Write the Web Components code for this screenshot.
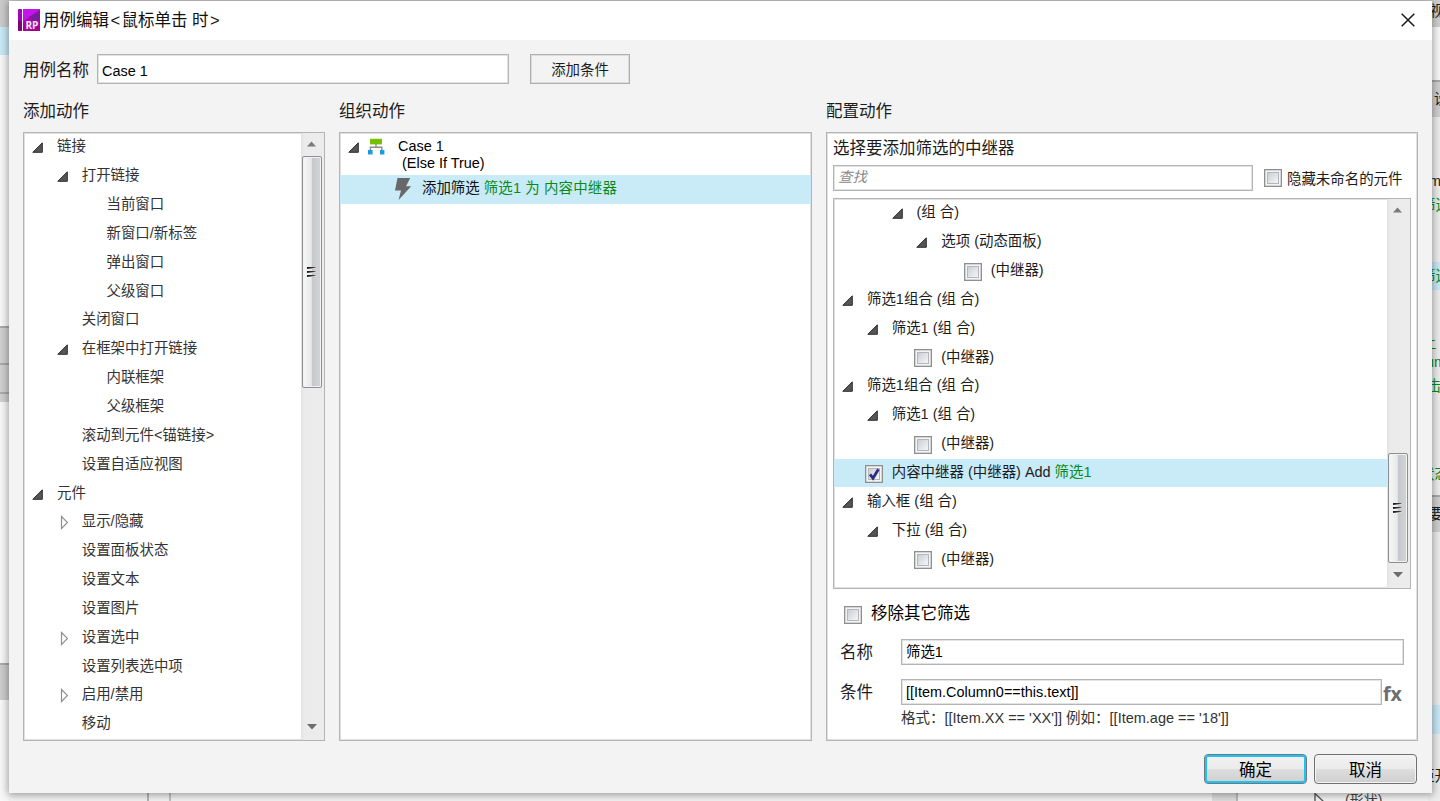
<!DOCTYPE html>
<html lang="zh-CN">
<head>
<meta charset="utf-8">
<title>用例编辑</title>
<style>
  html, body {
    margin: 0;
    height: 100%;
    overflow: hidden;
  }
  body {
    position: relative;
    font-family: "Liberation Sans", "Noto Sans CJK SC", sans-serif;
    font-size: 14.45px;
    color: #1c1c1c;
    background: #f4f4f4;
  }
</style>
</head>
<body>
<app-backdrop></app-backdrop>
<case-dialog></case-dialog>

<script>
// One slice of the window behind the dialog, text is clipped by the dialog edge
class BackSlice extends HTMLElement {
  constructor() {
    super();
    this.attachShadow({ mode: 'open' });
  }

  connectedCallback() {
    const h = this.getAttribute('h');
    const bg = this.getAttribute('bg') || 'transparent';
    const indent = this.getAttribute('indent') || 0;
    const line = this.hasAttribute('line') ? 'inset 0 2px #a9a9a9' : 'none';
    this.shadowRoot.innerHTML = `
      <style>
        :host {
          display: flex;
          align-items: center;
          flex: none;
          box-sizing: border-box;
          height: ${h}px;
          background: ${bg};
          box-shadow: ${line};
          white-space: nowrap;
          line-height: 20px;
        }
        span { margin-left: ${indent}px; }
      </style>
      <span><slot></slot></span>
    `;
  }
}

class AppBackdrop extends HTMLElement {
  constructor() {
    super();
    this.attachShadow({ mode: 'open' });
  }

  connectedCallback() {
    this.shadowRoot.innerHTML = `
      <style>
        :host {
          display: grid;
          grid-template-columns: 9px 1fr 12px;
          width: 1440px;
          height: 801px;
          overflow: hidden;
        }
        .left, .right { display: flex; flex-direction: column; overflow: hidden; }
        .left { background: #f8f8f8; }
        .right { background: #ededed; }
        .middle { display: flex; flex-direction: column; justify-content: space-between; }
        .top { height: 2px; background: #d2d2d2; }
        .bottom { display: flex; height: 9px; background: #f4f4f4; }
        .bottom i { flex: none; }
        .green { color: #0a8a1c; }
        .bottom span { font-size: 14px; line-height: 17px; margin-left: 20px; height: 9px; overflow: hidden; color: #444; }
        svg { margin-left: 76px; flex: none; }
      </style>
      <div class="left">
        <back-slice h="27" bg="#cbcbcb"></back-slice>
        <back-slice h="28" bg="#c9e9f6"></back-slice>
        <back-slice h="271"></back-slice>
        <back-slice h="37" bg="#d0d0d0" line></back-slice>
        <back-slice h="29" bg="#d0d0d0" line></back-slice>
        <back-slice h="10" bg="#d0d0d0" line></back-slice>
        <back-slice h="261"></back-slice>
        <back-slice h="37" bg="#cdcdcd" line></back-slice>
      </div>
      <div class="middle">
        <div class="top"></div>
        <div class="bottom">
          <i style="width:138px"></i><i style="width:2px;background:#b5b5b5"></i>
          <i style="width:20px"></i><i style="width:2px;background:#c3c3c3"></i>
          <i style="width:1041px"></i><i style="width:24px;background:#dedede"></i>
          <i style="width:2px;background:#bababa"></i>
          <svg width="11" height="9"><path d="M1 10V1.5L10 10" fill="none" stroke="#555" stroke-width="1.3"/></svg>
          <span>(形状)</span>
        </div>
      </div>
      <div class="right">
        <back-slice h="21" bg="#d0d0d0" indent="2">视图</back-slice>
        <back-slice h="6" bg="#d0d0d0"></back-slice>
        <back-slice h="53" bg="#f8f8f8"></back-slice>
        <back-slice h="37" bg="#d0d0d0" indent="6" line>设置</back-slice>
        <back-slice h="52"></back-slice>
        <back-slice h="24" indent="1">m</back-slice>
        <back-slice h="24" class="green" indent="-7">筛选</back-slice>
        <back-slice h="45"></back-slice>
        <back-slice h="28" bg="#c9e9f6" class="green" indent="-7">筛选</back-slice>
        <back-slice h="46"></back-slice>
        <back-slice h="14" class="green" indent="-6">上 -</back-slice>
        <back-slice h="24" class="green" indent="-2">um</back-slice>
        <back-slice h="24" class="green" indent="-1">击</back-slice>
        <back-slice h="62"></back-slice>
        <back-slice h="28" class="green" indent="-8">状态</back-slice>
        <back-slice h="7"></back-slice>
        <back-slice h="37" bg="#d0d0d0" indent="1" line>要</back-slice>
        <back-slice h="173"></back-slice>
        <back-slice h="29" bg="#c9e9f6"></back-slice>
        <back-slice h="28"></back-slice>
        <back-slice h="28" indent="-8">距开</back-slice>
      </div>
    `;
  }
}

class TextBox extends HTMLElement {
  constructor() {
    super();
    this.attachShadow({ mode: 'open' });
    this.shadowRoot.innerHTML = `
      <style>
        :host {
          display: flex;
          align-items: center;
          box-sizing: border-box;
          height: 26px;
          padding: 0 4px;
          border: 1px solid #b4b4b4;
          box-shadow: inset 0 0 0 1px #e2e2e2;
          background: #fff;
          color: #000;
          white-space: nowrap;
          line-height: 20px;
        }
        :host([placeholder]) { color: #8a8a8a; font-style: italic; }
      </style>
      <slot></slot>
    `;
  }
}

class CheckBox extends HTMLElement {
  constructor() {
    super();
    this.attachShadow({ mode: 'open' });
  }

  connectedCallback() {
    const tick = this.hasAttribute('checked')
      ? '<svg width="14" height="14" viewBox="0 0 14 14"><path d="M3 7.4L6 11.2L11.4 2.2" fill="none" stroke="#2b2c86" stroke-width="2.8"/></svg>'
      : '';
    this.shadowRoot.innerHTML = `
      <style>
        :host {
          display: flex;
          flex: none;
          box-sizing: border-box;
          width: 18px;
          height: 18px;
          border: 1px solid #8e8f8f;
          padding: 2px;
          background: #f4f4f4;
          box-shadow: inset 0 0 0 .5px #b5b5b5;
        }
        .well {
          flex: 1;
          box-sizing: border-box;
          border: 1px solid #b3b7bd;
          background: linear-gradient(135deg, #cbcfd5, #f6f6f6);
        }
        svg { display: block; margin: -2px; }
      </style>
      <div class="well">${tick}</div>
    `;
  }
}

class PushButton extends HTMLElement {
  constructor() {
    super();
    this.attachShadow({ mode: 'open' });
    this.shadowRoot.innerHTML = `
      <style>
        :host {
          display: flex;
          align-items: center;
          justify-content: center;
          box-sizing: border-box;
          width: 103px;
          height: 30px;
          padding-top: 1px;
          border: 1px solid #707070;
          border-radius: 4px;
          background: linear-gradient(#f2f2f2, #ebebeb 48%, #dddddd 52%, #cfcfcf);
          box-shadow: inset 0 0 0 1px #f4f4f4;
          font-size: 16.5px;
          line-height: 22px;
          color: #000;
        }
        :host([primary]) {
          border-color: #707a7e;
          box-shadow: inset 0 0 0 2px #1fc3f3;
        }
        :host([flat]) {
          width: 100px;
          border: 1px solid #b0b0b0;
          border-radius: 0;
          background: #f3f3f3;
          box-shadow: inset 0 0 0 1px #dcdcdc;
          font-size: 14.45px;
          color: #1c1c1c;
        }
      </style>
      <slot></slot>
    `;
  }
}

class ScrollBar extends HTMLElement {
  constructor() {
    super();
    this.attachShadow({ mode: 'open' });
  }

  connectedCallback() {
    const before = this.getAttribute('before');
    const size = this.getAttribute('size');
    this.shadowRoot.innerHTML = `
      <style>
        :host {
          display: flex;
          flex-direction: column;
          align-items: center;
          flex: none;
          box-sizing: border-box;
          width: 23px;
          padding-right: 1px;
          background: linear-gradient(90deg, #e2e2e2, #ebebeb 3px, #ececec);
        }
        .up { margin: 8px 1px 0 0; }
        .down { margin: auto 0 10px; }
        svg { display: block; flex: none; }
        .thumb {
          display: flex;
          align-items: center;
          justify-content: center;
          box-sizing: border-box;
          width: 20px;
          height: ${size}px;
          margin-top: ${before}px;
          border: 1px solid #8d8f92;
          border-radius: 2px;
          background: linear-gradient(90deg, #f7f7f7, #e9e9eb 46%, #c6c8cb 52%, #d3d4d7);
          box-shadow: inset 0 0 0 1px #f1f1f1;
        }
      </style>
      <svg class="up" width="9" height="6"><path d="M0 5.5L4.5 .5L9 5.5Z" fill="#7b7b7b"/></svg>
      <div class="thumb">
        <svg width="10" height="13">
          <defs><linearGradient id="g"><stop stop-color="#1b1b1b"/><stop offset=".6" stop-color="#333"/><stop offset="1" stop-color="#aaa"/></linearGradient></defs>
          <path d="M0 1H10V2L0 4ZM0 5H10V6L0 8ZM0 9H10V10L0 12Z" fill="#fff" opacity=".8"/>
          <path d="M0 1H10L8 2L0 3ZM0 5H10L8 6L0 7ZM0 9H10L8 10L0 11Z" fill="url(#g)"/>
        </svg>
      </div>
      <svg class="down" width="10" height="6"><path d="M0 0H10L5 5.5Z" fill="#6c6c6c"/></svg>
    `;
  }
}

// level: indent depth, state: open | closed | check | checked
class TreeRow extends HTMLElement {
  constructor() {
    super();
    this.attachShadow({ mode: 'open' });
  }

  connectedCallback() {
    const level = Number(this.getAttribute('level') || 0);
    const state = this.getAttribute('state');
    this.shadowRoot.innerHTML = `
      <style>
        :host {
          display: flex;
          align-items: center;
          flex: none;
          box-sizing: border-box;
          height: 28.85px;
          padding-left: ${(level * 24.75).toFixed(2)}px;
          padding-bottom: 2px;
          white-space: nowrap;
          line-height: 20px;
        }
        :host([selected]) { background: #c9eaf7; }
        .mark {
          display: flex;
          justify-content: flex-end;
          flex: none;
          box-sizing: border-box;
          width: 33px;
          padding: 3px 14px 0 0;
        }
        .mark.box { padding-right: 9px; }
      </style>
      <div class="mark ${state && state.startsWith('check') ? 'box' : ''}">${this.getMark(state)}</div>
      <slot></slot>
    `;
  }

  getMark(state) {
    if (state === 'open') return '<svg width="11" height="11"><path d="M.8 10.3L10.3 .8V10.3Z" fill="#555" stroke="#2e2e2e"/></svg>';
    if (state === 'closed') return '<svg width="11" height="15"><path d="M4.5 1.5V13.5L10.5 7.5Z" fill="#fff" stroke="#8f8f8f" stroke-width="1.2"/></svg>';
    if (state === 'check') return '<check-box></check-box>';
    if (state === 'checked') return '<check-box checked></check-box>';
    return '';
  }
}

class ListPanel extends HTMLElement {
  constructor() {
    super();
    this.attachShadow({ mode: 'open' });
    this.shadowRoot.innerHTML = `
      <style>
        :host {
          display: flex;
          box-sizing: border-box;
          border: 1px solid #b4b4b4;
          box-shadow: inset 0 0 0 1px #e0e0e0;
          background: #fff;
          overflow: hidden;
        }
        .rows {
          display: flex;
          flex-direction: column;
          flex: 1;
          min-width: 0;
        }
      </style>
      <div class="rows"><slot></slot></div>
      <slot name="scroll"></slot>
    `;
  }
}

class DialogTitle extends HTMLElement {
  constructor() {
    super();
    this.attachShadow({ mode: 'open' });
    this.shadowRoot.innerHTML = `
      <style>
        :host {
          display: flex;
          align-items: center;
          box-sizing: border-box;
          height: 39px;
          padding: 0 16.5px 2px 9px;
          background: #fff;
          font-size: 16.5px;
          line-height: 24px;
          color: #111;
        }
        .text { flex: 1; padding: 1px 0 0 3px; }
        .logo { display: block; }
      </style>
      <svg class="logo" width="22" height="22" viewBox="0 0 22 22">
        <defs>
          <linearGradient id="p" x1="0" y1="0" x2="0" y2="1"><stop stop-color="#b70fd0"/><stop offset="1" stop-color="#a3008f"/></linearGradient>
        </defs>
        <rect width="4" height="22" rx="1" fill="#a400b8"/>
        <path d="M0 12H4V22H1L0 21Z" fill="#7d0078"/>
        <rect x="5" width="17" height="22" rx=".6" fill="url(#p)"/>
        <path d="M5 12L22 1V0H5Z" fill="#c516ea"/>
        <path d="M11 8L22 1V12H15Z" fill="#7a1d9c"/>
        <text x="7.4" y="19.6" font-family="Open Sans, sans-serif" font-size="10.5" font-weight="700" textLength="13" lengthAdjust="spacingAndGlyphs" fill="#f6e4fa">RP</text>
      </svg>
      <div class="text"><slot></slot></div>
      <svg width="14" height="14"><path d="M.7 .7L13.3 13.3M13.3 .7L.7 13.3" stroke="#1a1a1a" stroke-width="1.5"/></svg>
    `;
  }
}

class CaseDialog extends HTMLElement {
  constructor() {
    super();
    this.attachShadow({ mode: 'open' });
  }

  connectedCallback() {
    this.shadowRoot.innerHTML = `
      <style>
        :host {
          position: absolute;
          left: 9px;
          top: 1px;
          width: 1422.5px;
          height: 792px;
          display: flex;
          flex-direction: column;
          background: #f3f3f3;
          box-shadow: 0 1px 8px 1px rgba(0, 0, 0, .38);
        }
        .wide { letter-spacing: 1.4px; padding-left: 1.4px; }
        .name {
          display: flex;
          align-items: center;
          padding: 14px 0 0 14px;
        }
        .name label { width: 74px; padding-top: 2px; }
        .name text-box { width: 412px; height: 30px; margin-right: 21px; padding-top: 3px; }
        label, h2 {
          flex: none;
          margin: 0;
          font-size: 16.5px;
          font-weight: 400;
          line-height: 24px;
        }
        .columns {
          display: grid;
          grid-template-columns: 302px 473px 592px;
          grid-template-rows: 48px 609px;
          column-gap: 14px;
          padding-left: 14px;
        }
        .columns h2 { padding-top: 15px; }
        .actions { color: #333; }
        .case {
          display: flex;
          padding: 5px 0 0 8px;
          height: 37px;
          line-height: 17.3px;
          color: #000;
        }
        .case svg, .step svg { flex: none; }
        .case div { margin-left: 13px; white-space: pre; }
        .step {
          display: flex;
          align-items: center;
          height: 28.5px;
          padding-left: 54px;
          gap: 10px;
          background: #c9eaf7;
          line-height: 20px;
          color: #111;
        }
        .step span { padding-bottom: 2px; }
        b { font-weight: 400; color: #0a8a1c; }
        .step b { letter-spacing: .15px; }
        .config {
          display: flex;
          flex-direction: column;
          box-sizing: border-box;
          padding: 3px 5px 0 6px;
          border: 1px solid #b4b4b4;
          box-shadow: inset 0 0 0 1px #e0e0e0;
          background: #fff;
        }
        .search { display: flex; align-items: flex-start; margin-top: 5px; }
        .search text-box { width: 420px; padding-bottom: 2px; }
        .search check-box { margin: 4px 5px 0 11px; }
        .search span { line-height: 20px; padding-top: 4px; }
        .config list-panel { width: 578px; height: 391px; margin-top: 7px; }
        .remove { display: flex; align-items: center; height: 24px; margin: 12px 0 0 11px; gap: 9px; color: #000; }
        .remove check-box { margin-top: 4px; }
        .remove label { padding-bottom: 1px; }
        .field { display: flex; align-items: center; height: 26px; margin: 14px 0 0 7px; }
        .field label { width: 61px; }
        .field text-box { width: 503px; }
        .field .short { width: 481px; }
        .fx {
          font: 700 19.5px "Open Sans", sans-serif;
          color: #6e6e6e;
          padding: 2px 0 0 1px;
        }
        .hint { margin: 3px 0 0 68px; line-height: 20px; color: #333; font-size: 14.5px; }
        .buttons {
          display: flex;
          justify-content: flex-end;
          gap: 7px;
          padding: 13px 14.5px 0 0;
        }
      </style>
      <dialog-title>用例编辑<span class="wide">&lt;</span>鼠标单击 时<span class="wide">&gt;</span></dialog-title>
      <div class="name">
        <label>用例名称</label>
        <text-box>Case 1</text-box>
        <push-button flat>添加条件</push-button>
      </div>
      <div class="columns">
        <h2>添加动作</h2>
        <h2>组织动作</h2>
        <h2>配置动作</h2>
        <list-panel class="actions">
          <tree-row state="open">链接</tree-row>
          <tree-row level="1" state="open">打开链接</tree-row>
          <tree-row level="2">当前窗口</tree-row>
          <tree-row level="2">新窗口/新标签</tree-row>
          <tree-row level="2">弹出窗口</tree-row>
          <tree-row level="2">父级窗口</tree-row>
          <tree-row level="1">关闭窗口</tree-row>
          <tree-row level="1" state="open">在框架中打开链接</tree-row>
          <tree-row level="2">内联框架</tree-row>
          <tree-row level="2">父级框架</tree-row>
          <tree-row level="1">滚动到元件&lt;锚链接&gt;</tree-row>
          <tree-row level="1">设置自适应视图</tree-row>
          <tree-row state="open">元件</tree-row>
          <tree-row level="1" state="closed">显示/隐藏</tree-row>
          <tree-row level="1">设置面板状态</tree-row>
          <tree-row level="1">设置文本</tree-row>
          <tree-row level="1">设置图片</tree-row>
          <tree-row level="1" state="closed">设置选中</tree-row>
          <tree-row level="1">设置列表选中项</tree-row>
          <tree-row level="1" state="closed">启用/禁用</tree-row>
          <tree-row level="1">移动</tree-row>
          <scroll-bar slot="scroll" before="9" size="232"></scroll-bar>
        </list-panel>
        <list-panel>
          <div class="case">
            <svg width="37" height="18">
              <path d="M.8 14.3L10.3 4.8V14.3Z" fill="#555" stroke="#2e2e2e"/>
              <path d="M28 6V9.3M22.4 13V9.3H33.8V13" fill="none" stroke="#8c8c8c" stroke-width="1.4"/>
              <path d="M22 .8H34V6.4H22Z" fill="#76c000"/>
              <path d="M20 12H24.6V16.4H20ZM32 12H36.4V16.4H32Z" fill="#1b9ddb"/>
            </svg>
            <div>Case 1
 (Else If True)</div>
          </div>
          <div class="step">
            <svg width="18" height="24"><path d="M3.5 1H16.2L12 9.2H17.2L4.6 23L7 13.6H1Z" fill="#686868"/></svg>
            <span>添加筛选 <b>筛选1 为 内容中继器</b></span>
          </div>
        </list-panel>
        <div class="config">
          <label>选择要添加筛选的中继器</label>
          <div class="search">
            <text-box placeholder>查找</text-box>
            <check-box></check-box>
            <span>隐藏未命名的元件</span>
          </div>
          <list-panel>
            <tree-row level="2" state="open">(组 合)</tree-row>
            <tree-row level="3" state="open">选项 (动态面板)</tree-row>
            <tree-row level="5" state="check">(中继器)</tree-row>
            <tree-row state="open">筛选1组合 (组 合)</tree-row>
            <tree-row level="1" state="open">筛选1 (组 合)</tree-row>
            <tree-row level="3" state="check">(中继器)</tree-row>
            <tree-row state="open">筛选1组合 (组 合)</tree-row>
            <tree-row level="1" state="open">筛选1 (组 合)</tree-row>
            <tree-row level="3" state="check">(中继器)</tree-row>
            <tree-row level="1" state="checked" selected><span>内容中继器 (中继器) Add <b>筛选1</b></span></tree-row>
            <tree-row state="open">输入框 (组 合)</tree-row>
            <tree-row level="1" state="open">下拉 (组 合)</tree-row>
            <tree-row level="3" state="check">(中继器)</tree-row>
            <scroll-bar slot="scroll" before="240" size="110"></scroll-bar>
          </list-panel>
          <div class="remove"><check-box></check-box><label>移除其它筛选</label></div>
          <div class="field"><label>名称</label><text-box>筛选1</text-box></div>
          <div class="field"><label>条件</label><text-box class="short">[[Item.Column0==this.text]]</text-box><span class="fx">fx</span></div>
          <div class="hint">格式：[[Item.XX == 'XX']] 例如：[[Item.age == '18']]</div>
        </div>
      </div>
      <div class="buttons">
        <push-button primary>确定</push-button>
        <push-button>取消</push-button>
      </div>
    `;
  }
}

customElements.define('back-slice', BackSlice);
customElements.define('app-backdrop', AppBackdrop);
customElements.define('text-box', TextBox);
customElements.define('check-box', CheckBox);
customElements.define('push-button', PushButton);
customElements.define('scroll-bar', ScrollBar);
customElements.define('tree-row', TreeRow);
customElements.define('list-panel', ListPanel);
customElements.define('dialog-title', DialogTitle);
customElements.define('case-dialog', CaseDialog);
</script>
</body>
</html>
